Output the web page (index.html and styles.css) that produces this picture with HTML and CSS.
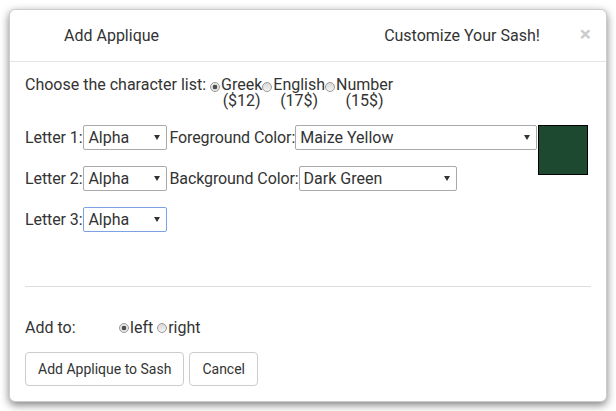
FILE: index.html
```html
<!DOCTYPE html>
<html lang="en">
<head>
    <meta charset="UTF-8">
    <meta name="viewport" content="width=device-width, initial-scale=1.0">
    <title>Add Applique</title>
    <link rel="stylesheet" href="styles.css">
</head>
<body>
    <!-- Applique Modal -->
    <div class="modal-content">
        <div class="modal-header">
            <h4 class="modal-title">Add Applique</h4>
            <h4 class="modal-tagline">Customize Your Sash!</h4>
            <button class="close" type="button">&times;</button>
        </div>

        <div class="modal-body">
            <!-- Character set -->
            <div class="char-list">
                <span class="char-label">Choose the character list:</span>
                <label class="char-option first">
                    <input type="radio" name="charset" checked>
                    <span class="opt-text">Greek<br>($12)</span>
                </label>
                <label class="char-option">
                    <input type="radio" name="charset">
                    <span class="opt-text">English<br>(17$)</span>
                </label>
                <label class="char-option">
                    <input type="radio" name="charset">
                    <span class="opt-text">Number<br>(15$)</span>
                </label>
            </div>

            <!-- Letters -->
            <div class="letter-row">
                <label>Letter 1:</label>
                <span class="select-wrap letter"><select><option>Alpha</option></select></span>
                <label>Foreground Color:</label>
                <span class="select-wrap fg"><select><option>Maize Yellow</option></select></span>
                <span class="swatch"></span>
            </div>
            <div class="letter-row">
                <label>Letter 2:</label>
                <span class="select-wrap letter"><select><option>Alpha</option></select></span>
                <label>Background Color:</label>
                <span class="select-wrap bg"><select><option>Dark Green</option></select></span>
            </div>
            <div class="letter-row">
                <label>Letter 3:</label>
                <span class="select-wrap letter focused"><select><option>Alpha</option></select></span>
            </div>

            <hr>

            <div class="add-to">
                <span class="add-label">Add to:</span>
                <label><input type="radio" name="side" checked>left</label>
                <label><input type="radio" name="side">right</label>
            </div>

            <div class="actions">
                <button class="btn" type="button">Add Applique to Sash</button>
                <button class="btn" type="button">Cancel</button>
            </div>
        </div>
    </div>
</body>
</html>
```

FILE: styles.css
```css
/* General Styling */
body, html {
    margin: 0;
    padding: 0;
    background: #fff;
    font-family: Roboto, "Helvetica Neue", Arial, sans-serif;
    font-size: 16px;
    color: #333;
}

/* Modal box */
.modal-content {
    box-sizing: border-box;
    width: 598px;
    margin: 9px;
    background: #fff;
    border: 1px solid rgba(0, 0, 0, 0.2);
    border-radius: 6px;
    box-shadow: 0 3px 9px rgba(0, 0, 0, 0.5);
}

.modal-header {
    display: flex;
    align-items: center;
    padding: 15px;
    border-bottom: 1px solid #e5e5e5;
}

.modal-title,
.modal-tagline {
    margin: 0;
    font-size: 16px;
    font-weight: normal;
    line-height: 21px;
}

.modal-title {
    flex: 1;
    margin-left: 39px;
}

.modal-tagline {
    margin-right: 40px;
}

.close {
    padding: 0;
    margin-top: -2px;
    border: 0;
    background: none;
    font-family: inherit;
    font-size: 21px;
    font-weight: bold;
    line-height: 1;
    color: #000;
    opacity: 0.2;
    cursor: pointer;
}

.modal-body {
    padding: 15px;
}

/* Radio buttons (old grey look) */
input[type="radio"] {
    appearance: none;
    -webkit-appearance: none;
    box-sizing: border-box;
    width: 10px;
    height: 10px;
    margin: 0;
    border: 1px solid #9a9a9a;
    border-radius: 50%;
    background: linear-gradient(#d8d8d8, #f4f4f4);
    flex-shrink: 0;
}

input[type="radio"]:checked {
    background: radial-gradient(circle, #4d4d4d 0, #4d4d4d 2px, #e2e2e2 2.6px, #f2f2f2 100%);
}

/* Character list */
.char-list {
    display: flex;
    align-items: flex-start;
    line-height: 16px;
}

.char-option {
    display: flex;
    align-items: flex-start;
}

.char-option input {
    margin: 5px 1px 0 0;
}

.char-option.first input {
    margin-left: 4px;
}

.opt-text {
    text-align: center;
}

/* Letter rows */
.letter-row {
    display: flex;
    align-items: center;
    height: 25px;
    margin-top: 16px;
    white-space: nowrap;
}

.letter-row > * {
    flex-shrink: 0;
}

.letter-row label {
    letter-spacing: -0.1px;
}

.select-wrap {
    position: relative;
    display: block;
    margin: 0 2px 0 1px;
}

.select-wrap select {
    appearance: none;
    -webkit-appearance: none;
    box-sizing: border-box;
    width: 100%;
    height: 25px;
    padding: 0 18px 0 4px;
    border: 1px solid #a9a9a9;
    border-radius: 2px;
    background: #fff;
    font-family: inherit;
    font-size: 16px;
    color: #333;
}

/* little arrow over the select */
.select-wrap::after {
    content: "";
    position: absolute;
    right: 7px;
    top: 10px;
    border-left: 3px solid transparent;
    border-right: 3px solid transparent;
    border-top: 5px solid #333;
    pointer-events: none;
}

.select-wrap.letter { width: 84px; }
.select-wrap.fg { width: 242px; margin: 0 1px 0 0; }
.select-wrap.bg { width: 158px; margin: 0; }

.select-wrap.focused select {
    border-color: #7da2e3;
}

.swatch {
    align-self: flex-start;
    box-sizing: border-box;
    width: 50px;
    height: 50px;
    background: #1d4930;
    border: 1px solid #000;
}

hr {
    margin: 54px 0 0;
    border: 0;
    border-top: 1px solid #ddd;
}

/* Add to */
.add-to {
    display: flex;
    align-items: center;
    height: 16px;
    margin-top: 33px;
    line-height: 16px;
}

.add-label {
    width: 94px;
}

.add-to label {
    display: flex;
    align-items: center;
    margin-right: 4px;
}

.add-to input {
    margin-right: 1px;
}

.actions {
    display: flex;
    gap: 5px;
    margin-top: 16px;
}

.btn {
    padding: 6px 12px;
    border: 1px solid #ccc;
    border-radius: 4px;
    background: #fff;
    font-family: inherit;
    font-size: 14px;
    line-height: 20px;
    color: #333;
    cursor: pointer;
}
```
